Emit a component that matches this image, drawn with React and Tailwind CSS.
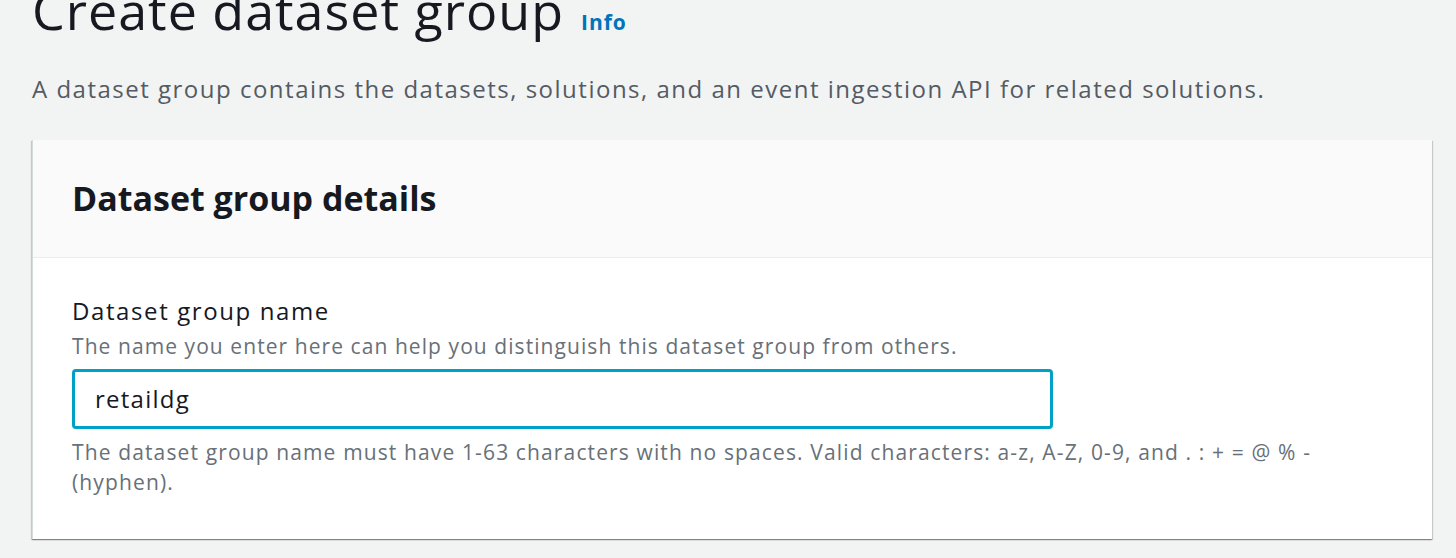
import React from "react";

const font = { fontFamily: "'Open Sans', 'Noto Sans', sans-serif" };

export default function App() {
  return (
    <div className="min-h-screen bg-[#f2f3f3] pl-[32px] pr-[24px] overflow-hidden" style={font}>
      {/* Page header */}
      <div className="-mt-[20px] flex items-baseline gap-[17px]">
        <h1 className="text-[52px] leading-[60px] font-normal tracking-[1px] text-[#16191f]">Create dataset group</h1>
        <a className="text-[21px] font-bold tracking-[1px] text-[#0073bb]">Info</a>
      </div>
      <p className="mt-[32px] text-[24px] leading-[34px] tracking-[1.5px] text-[#545b64]">
        A dataset group contains the datasets, solutions, and an event ingestion API for related solutions.
      </p>

      {/* Card */}
      <div className="mt-[34px] bg-white border-l border-[#d5dbdb] shadow-[0_1px_1px_0_rgba(0,28,36,0.3),1px_1px_1px_0_rgba(0,28,36,0.15),-1px_1px_1px_0_rgba(0,28,36,0.15)]">
        <div className="bg-[#fafafa] border-b border-[#eaeded] px-[39px] py-[36px]">
          <h2 className="text-[34px] leading-[45px] font-bold text-[#16191f]">Dataset group details</h2>
        </div>
        <div className="px-[39px] pt-[36px] pb-[42px]">
          <label className="block text-[24px] leading-[33px] tracking-[1.6px] text-[#16191f]">Dataset group name</label>
          <div className="mt-[4px] text-[21px] leading-[30px] tracking-[1.07px] text-[#687078]">
            The name you enter here can help you distinguish this dataset group from others.
          </div>
          <div className="mt-[8px] w-[981px] h-[60px] border-[3px] border-[#00a1c9] rounded-[4px] bg-white flex items-center px-[20px]">
            <span className="text-[24px] tracking-[1.25px] text-[#16191f]">retaildg</span>
          </div>
          <div className="mt-[8px] text-[21px] leading-[30px] tracking-[1.13px] text-[#687078]">
            The dataset group name must have 1-63 characters with no spaces. Valid characters: a-z, A-Z, 0-9, and . : + = @ % - (hyphen).
          </div>
        </div>
      </div>
    </div>
  );
}
